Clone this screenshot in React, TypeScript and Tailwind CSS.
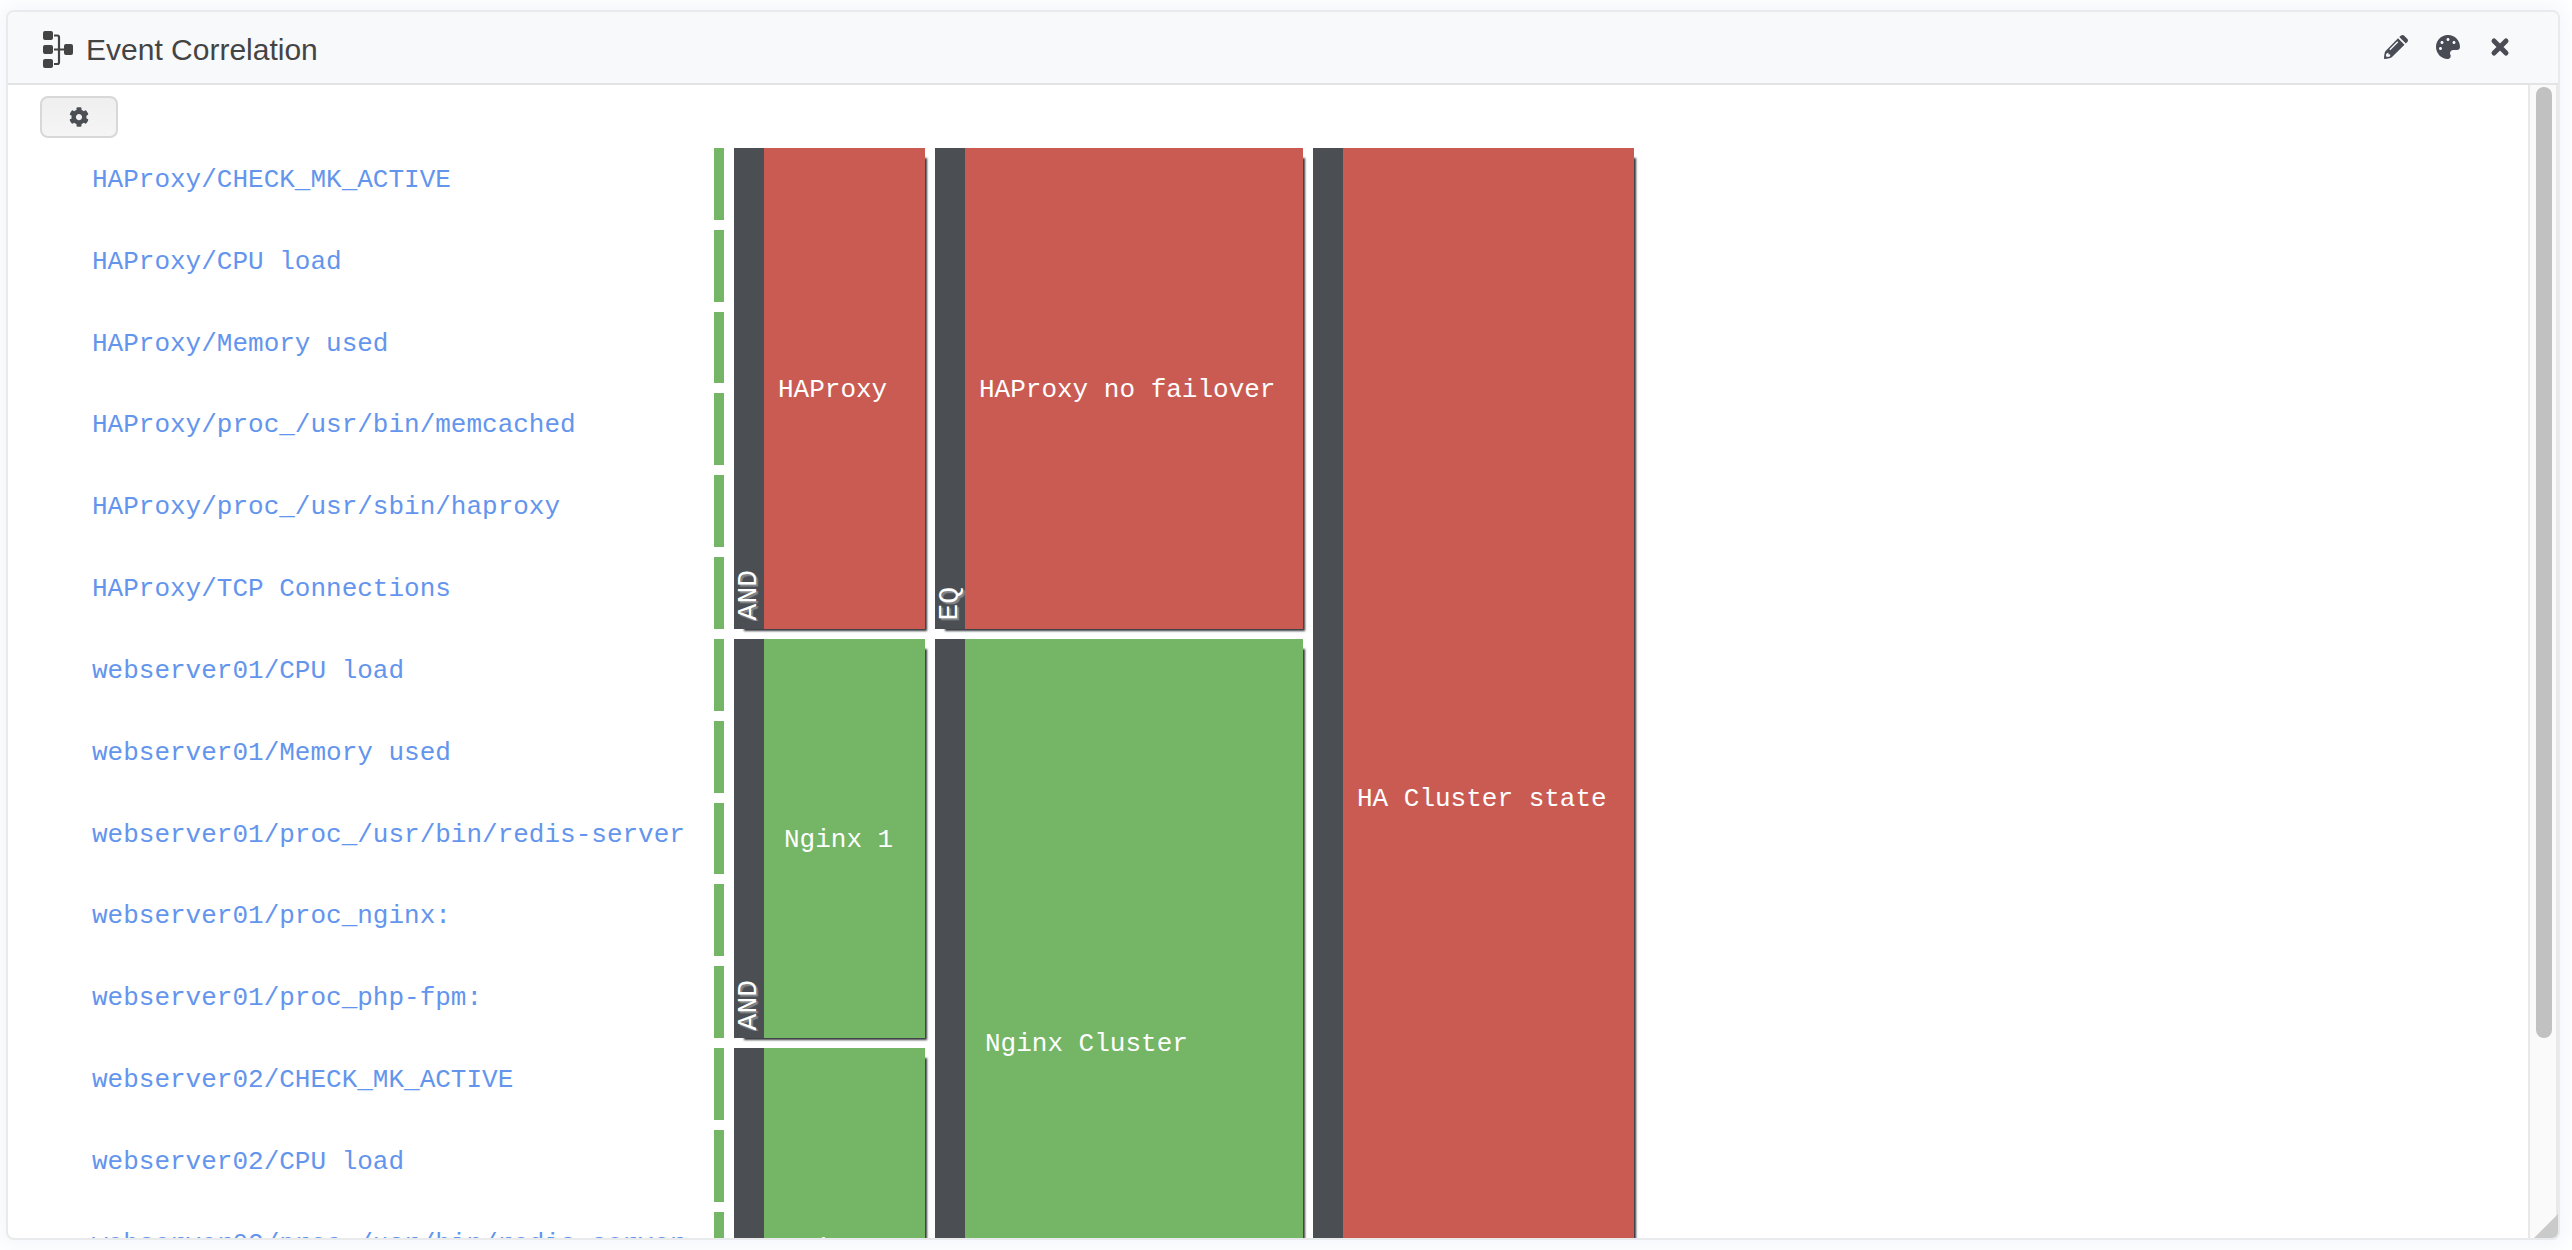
import { FaPalette, FaCog } from "react-icons/fa";

const services = [
  "HAProxy/CHECK_MK_ACTIVE",
  "HAProxy/CPU load",
  "HAProxy/Memory used",
  "HAProxy/proc_/usr/bin/memcached",
  "HAProxy/proc_/usr/sbin/haproxy",
  "HAProxy/TCP Connections",
  "webserver01/CPU load",
  "webserver01/Memory used",
  "webserver01/proc_/usr/bin/redis-server",
  "webserver01/proc_nginx:",
  "webserver01/proc_php-fpm:",
  "webserver02/CHECK_MK_ACTIVE",
  "webserver02/CPU load",
  "webserver02/proc_/usr/bin/redis-server",
  "webserver02/proc_nginx:",
  "webserver02/proc_php-fpm:",
];

type RuleProps = { label: string; operator?: string; place: string; tone: string; pad?: string };

function Rule({ label, operator, place, tone, pad = "pl-[14px]" }: RuleProps) {
  return (
    <div className={`flex text-white shadow-[6px_6px_2px_-4px_#33363a] ${place} ${tone}`}>
      <div className="flex w-[30px] shrink-0 items-end justify-center bg-[#4b4f54] pb-2">
        {operator && (
          <span className="rotate-180 text-[28px] leading-[30px] [text-shadow:-2px_2px_1px_#85888b] [writing-mode:vertical-rl]">
            {operator}
          </span>
        )}
      </div>
      <div className={`flex items-center pt-1 whitespace-nowrap ${pad}`}>{label}</div>
    </div>
  );
}

function DiagramIcon() {
  return (
    <svg viewBox="0 0 30 38" className="h-[38px] w-[30px]" fill="#444" aria-hidden="true">
      <rect x="0" y="0" width="10" height="9" rx="2" />
      <rect x="0" y="14" width="10" height="9" rx="2" />
      <rect x="0" y="28" width="10" height="9" rx="2" />
      <rect x="21" y="13" width="9" height="11" rx="2" />
      <path d="M11 4.500h3.500q1.500 0 1.500 1.500v25q0 2-1.500 2H11M11 18.500h11" fill="none" stroke="#444" strokeWidth="2.200" />
    </svg>
  );
}

function PencilIcon() {
  return (
    <svg viewBox="0 0 24 24" className="size-6" fill="#494c55" aria-hidden="true">
      <path fillRule="evenodd" d="M14 3.300 20.500 9.800 8 22Q6.500 23.500 0 24Q.2 17.500 1.600 16ZM2.300 18.700 1.900 21 3 22.100 6 21.400 6.300 19.500 4.500 19.200 4.300 17.600ZM13.300 6.300 5.300 14.300 6.300 15.300 14.300 7.300Z" />
      <path d="M15.300 2 17 .6Q18.700-.6 20.200.8L23.200 3.800Q24.700 5.500 23.300 7L21.800 8.500Z" />
    </svg>
  );
}

function CrossIcon() {
  return (
    <svg viewBox="0 0 16 16" className="size-4 overflow-visible" stroke="#494c55" strokeWidth="5" strokeLinecap="round" aria-hidden="true">
      <path d="M2 2 14 14M14 2 2 14" />
    </svg>
  );
}

export default function App() {
  return (
    <div className="h-screen bg-white pt-[10px] pr-3 pb-[10px] pl-[6px] font-['Liberation_Sans',sans-serif]">
      <section className="relative flex h-full flex-col overflow-hidden rounded-lg border-2 border-[#e9eaeb] bg-white shadow-[0_0_20px_6px_#f3f6fb]">
        <header className="flex h-[73px] shrink-0 items-center justify-between border-b-2 border-[#e3e4e6] bg-[#f8f9fb] pr-[46px] pl-[35px]">
          <h1 className="flex items-center gap-[13px] pt-1 text-[30px] text-[#444]">
            <DiagramIcon />
            Event Correlation
          </h1>
          <div className="flex items-center gap-7 pb-[2px]">
            <button type="button" aria-label="Edit"><PencilIcon /></button>
            <button type="button" aria-label="Change colours">
              <FaPalette className="size-6 text-[#494c55]" />
            </button>
            <button type="button" aria-label="Close" className="flex size-6 items-center justify-center"><CrossIcon /></button>
          </div>
        </header>

        <div className="flex min-h-0 flex-1">
          <main className="min-w-0 flex-1 overflow-hidden pt-[11px] pl-8">
            <button
              type="button"
              aria-label="Settings"
              className="flex h-[42px] w-[78px] items-center justify-center rounded-lg border-2 border-[#d8d8d8] bg-linear-to-b from-[#efefef] to-[#f5f5f5]"
            >
              <FaCog className="size-5 text-[#4b4f54]" />
            </button>
            <div className="mt-[10px] grid h-[1299px] grid-flow-col grid-cols-[674px_191px_368px_321px] grid-rows-[repeat(16,minmax(0,1fr))] gap-[10px] pl-[10px] font-['Liberation_Mono',monospace] text-[26px]">
              {services.map((name) => (
                <div key={name} className="flex justify-between pl-[42px]">
                  <a href="#" className="mt-[17px] self-start leading-[30px] whitespace-nowrap text-[#6495ed]">
                    {name}
                  </a>
                  <span className="w-[10px] bg-[#74b566]" />
                </div>
              ))}
              <Rule label="HAProxy" operator="AND" place="col-start-2 row-start-1 row-span-6" tone="bg-[#ca5b53]" />
              <Rule label="Nginx 1" operator="AND" place="col-start-2 row-start-7 row-span-5" tone="bg-[#74b566]" pad="pl-[20px]" />
              <Rule label="Nginx 2" operator="AND" place="col-start-2 row-start-12 row-span-5" tone="bg-[#74b566]" pad="pl-[20px]" />
              <Rule label="HAProxy no failover" operator="EQ" place="col-start-3 row-start-1 row-span-6" tone="bg-[#ca5b53]" />
              <Rule label="Nginx Cluster" place="col-start-3 row-start-7 row-span-10" tone="bg-[#74b566]" pad="pl-[20px]" />
              <Rule label="HA Cluster state" place="col-start-4 row-start-1 row-span-16" tone="bg-[#ca5b53]" />
            </div>
          </main>
          <div className="w-[30px] shrink-0 border-x-2 border-[#e8e8e8] bg-[#fafafa] pt-[2px] pl-[6px]">
            <div className="h-[calc(83%-4px)] w-4 rounded-full bg-[#c1c1c1]" />
          </div>
        </div>
        <div className="absolute right-0 bottom-0 size-6 bg-[#cacaca] [clip-path:polygon(100%_0,100%_100%,0_100%)]" />
      </section>
    </div>
  );
}
